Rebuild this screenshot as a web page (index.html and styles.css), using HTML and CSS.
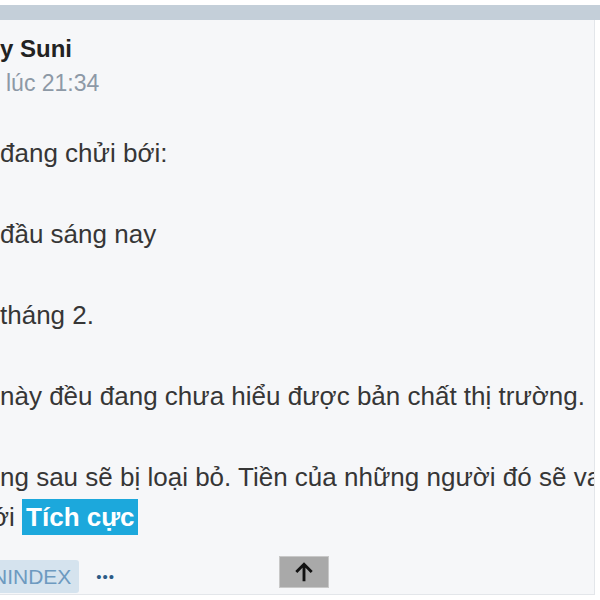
FILE: index.html
```html
<!DOCTYPE html>
<html lang="vi">
<head>
    <meta charset="UTF-8">
    <meta name="viewport" content="width=device-width, initial-scale=1.0">
    <title>Bài viết</title>
    <link rel="stylesheet" href="styles.css">
</head>
<body>
    <div class="topbar"></div>

    <div class="post">
        <div class="post-head">
            <div class="author">y Suni</div>
            <div class="time">lúc 21:34</div>
        </div>

        <div class="post-body">
            <p>đang chửi bới:</p>
            <p>đầu sáng nay</p>
            <p>tháng 2.</p>
            <p>này đều đang chưa hiểu được bản chất thị trường.</p>
            <p>ng sau sẽ bị loại bỏ. Tiền của những người đó sẽ va<br><span class="cut">ới</span> <span class="sentiment">Tích cực</span></p>
        </div>

        <div class="post-foot">
            <span class="tag">NINDEX</span>
            <span class="more">•••</span>
            <button class="to-top" aria-label="Lên đầu trang">
                <svg width="22" height="22" viewBox="0 0 20 20"><path d="M10 18.5V3M3 10l7-7 7 7" fill="none" stroke="#111" stroke-width="2.6"/></svg>
            </button>
        </div>
    </div>
</body>
</html>
```

FILE: styles.css
```css
body {
    margin: 0;
    font-family: "Liberation Sans", Arial, sans-serif;
    background-color: #fff;
    color: #363636;
    overflow: hidden;
}

.topbar {
    height: 15px;
    margin-top: 5px;
    background-color: #c4cfd9;
}

.post {
    width: 595px;
    height: 575px;
    box-sizing: border-box;
    background-color: #f6f7f9;
    border-right: 1px solid #e3e6ea;
    border-bottom: 1px solid #e3e6ea;
    overflow: hidden;
    display: flex;
    flex-direction: column;
}

.post-head {
    padding-top: 15px;
}

.author {
    font-size: 24px;
    font-weight: bold;
    color: #222;
    line-height: 28px;
}

.time {
    font-size: 23px;
    color: #8d99a6;
    line-height: 28px;
    margin-top: 6px;
    margin-left: 6px;
}

.post-body {
    margin-top: 36px;
    font-size: 26px;
    line-height: 40px;
    white-space: nowrap;
}

.post-body p {
    margin: 0 0 41px 0;
}

.post-body p:last-child {
    margin-bottom: 0;
}

/* the start of the word is outside the crop */
.cut {
    margin-left: -8px;
}

.sentiment {
    display: inline-block;
    background-color: #1ca8dc;
    color: #fff;
    font-weight: bold;
    padding: 0 4px;
    line-height: 36px;
}

.post-foot {
    display: flex;
    align-items: center;
    margin-top: 23px;
}

.tag {
    background-color: #d5e3ee;
    color: #6d9ac0;
    font-size: 21px;
    line-height: 33px;
    padding: 0 8px 0 0;
    margin-left: -8px;
    border-radius: 3px;
}

.more {
    color: #2b5b86;
    font-size: 15px;
    margin-left: 17px;
    letter-spacing: 1px;
}

.to-top {
    margin-left: 164px;
    margin-top: -9px;
    width: 50px;
    height: 32px;
    border: 1px solid #c8c8c8;
    background-color: #a9a9a9;
    padding: 0;
    display: flex;
    align-items: center;
    justify-content: center;
}
```
